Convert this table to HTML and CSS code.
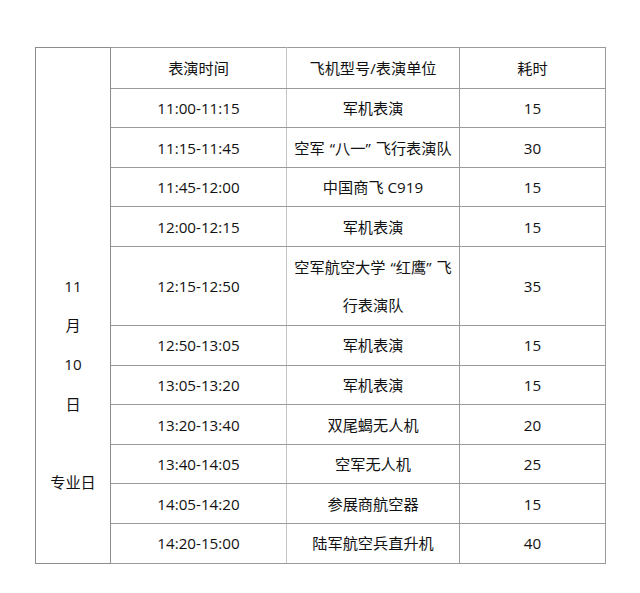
FILE: index.html
```html
<!DOCTYPE html>
<html lang="zh-CN">
<head>
<meta charset="utf-8">
<title>表演时间</title>
<link rel="stylesheet" href="styles.css">
</head>
<body>
<table class="schedule">
  <colgroup>
    <col class="c-day">
    <col class="c-time">
    <col class="c-unit">
    <col class="c-dur">
  </colgroup>
  <tbody>
    <tr class="head">
      <td class="day" rowspan="13">11<br>月<br>10<br>日<br><br>专业日</td>
      <td class="time">表演时间</td>
      <td class="unit">飞机型号/表演单位</td>
      <td class="dur">耗时</td>
    </tr>
    <tr><td class="time">11:00-11:15</td><td class="unit">军机表演</td><td class="dur">15</td></tr>
    <tr><td class="time">11:15-11:45</td><td class="unit">空军<span class="qo">“</span>八一<span class="qc">”</span>飞行表演队</td><td class="dur">30</td></tr>
    <tr><td class="time">11:45-12:00</td><td class="unit">中国商飞 C919</td><td class="dur">15</td></tr>
    <tr><td class="time">12:00-12:15</td><td class="unit">军机表演</td><td class="dur">15</td></tr>
    <tr class="tall"><td class="time">12:15-12:50</td><td class="unit two">空军航空大学<span class="qo">“</span>红鹰<span class="qc">”</span>飞<br>行表演队</td><td class="dur">35</td></tr>
    <tr><td class="time">12:50-13:05</td><td class="unit">军机表演</td><td class="dur">15</td></tr>
    <tr><td class="time">13:05-13:20</td><td class="unit">军机表演</td><td class="dur">15</td></tr>
    <tr><td class="time">13:20-13:40</td><td class="unit">双尾蝎无人机</td><td class="dur">20</td></tr>
    <tr><td class="time">13:40-14:05</td><td class="unit">空军无人机</td><td class="dur">25</td></tr>
    <tr><td class="time">14:05-14:20</td><td class="unit">参展商航空器</td><td class="dur">15</td></tr>
    <tr><td class="time">14:20-15:00</td><td class="unit">陆军航空兵直升机</td><td class="dur">40</td></tr>
  </tbody>
</table>
</body>
</html>
```
FILE: styles.css
```css
html, body {
  margin: 0;
  padding: 0;
  background: #ffffff;
}

body {
  padding: 47px 0 0 35px;
  font-family: "Open Sans", "Noto Sans CJK SC", sans-serif;
  font-size: 15.2px;
  color: #111111;
}

.schedule {
  border-collapse: collapse;
  table-layout: fixed;
  width: 570px;
}

.c-day { width: 75px; }
.c-time { width: 176px; }
.c-unit { width: 173px; }
.c-dur { width: 146px; }

.schedule td {
  border: 1px solid #9a9a9a;
  padding: 0;
  text-align: center;
  vertical-align: middle;
  line-height: 20px;
  white-space: nowrap;
}

.schedule tr { height: 39.6px; }
.schedule tr.head { height: 40.7px; }
.schedule tr.tall { height: 79px; }

.schedule td.time { border-right-color: #c4c4c4; }

.schedule td.day {
  vertical-align: bottom;
  padding-bottom: 60px;
  line-height: 39.3px;
  border-color: #8c8c8c;
}

.schedule td.two { line-height: 38.3px; }

.qo {
  margin-left: 5px;
}

.qc {
  margin-right: 5px;
}
```
